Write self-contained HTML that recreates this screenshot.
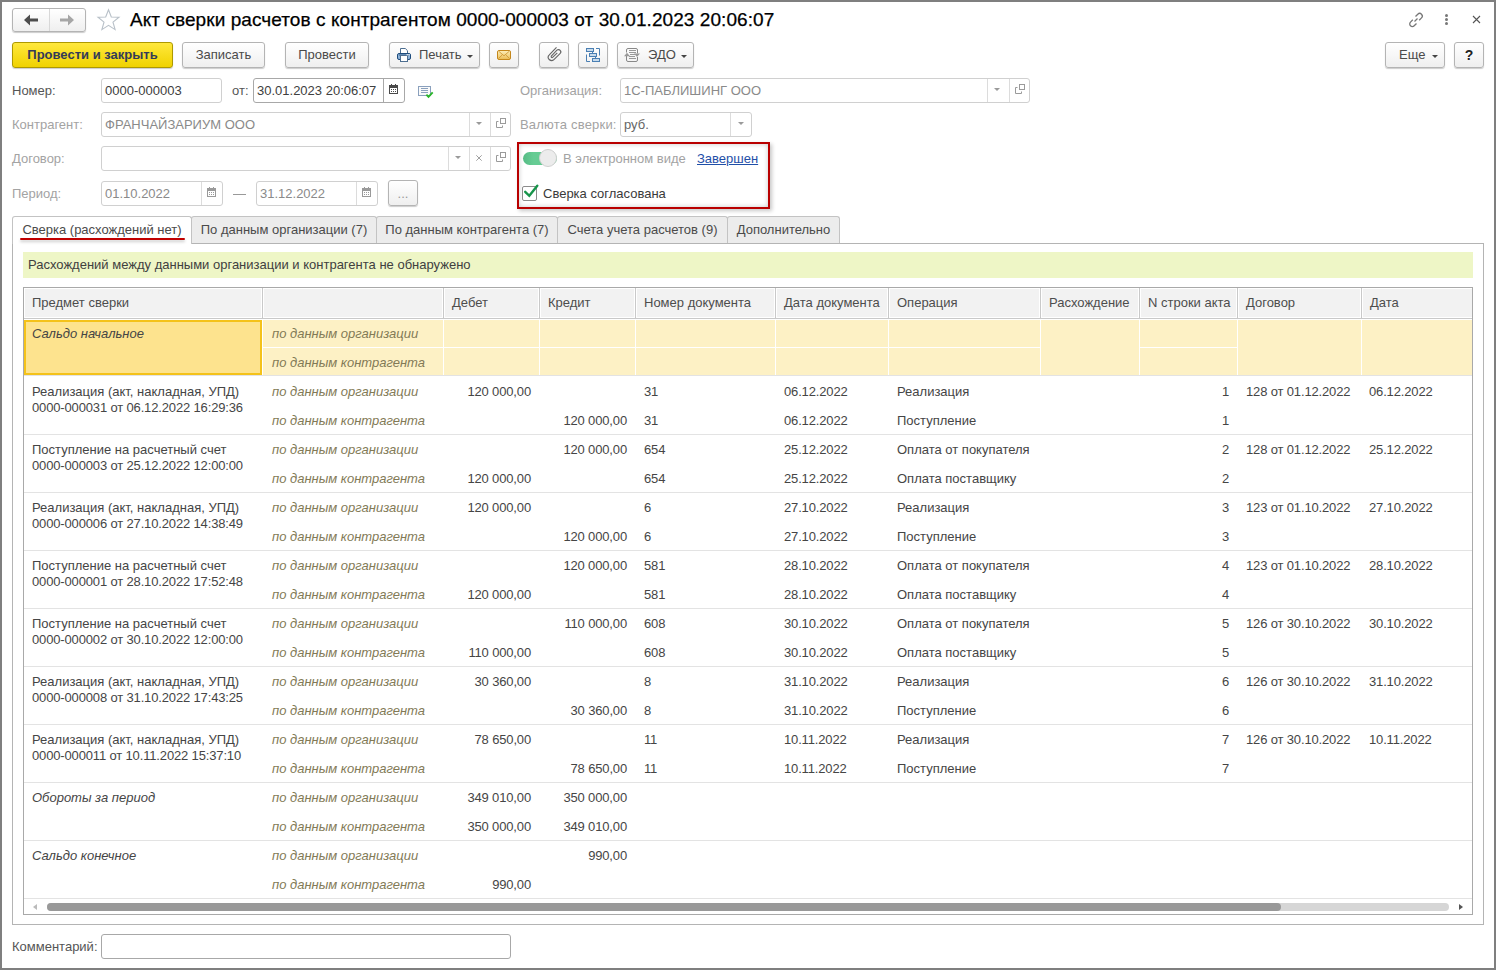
<!DOCTYPE html>
<html><head><meta charset="utf-8"><style>
*{box-sizing:border-box;margin:0;padding:0}
html,body{width:1496px;height:970px;overflow:hidden;background:#fff}
body{font-family:"Liberation Sans",sans-serif;font-size:13px;color:#333;position:relative}
.a{position:absolute}
#win{position:absolute;left:0;top:0;width:1496px;height:970px;border:2px solid #7f7f7f}
.btn{position:absolute;height:26px;border:1px solid #b4b4b4;border-radius:3px;background:linear-gradient(#fff,#efefef);box-shadow:0 1px 1px rgba(0,0,0,.2);color:#4a4a4a;text-align:center;line-height:24px;white-space:nowrap}
.ybtn{background:linear-gradient(#ffe83c,#f0d200);border-color:#ae9900;color:#333a58;font-weight:bold}
.lbl{position:absolute;color:#555;line-height:16px;white-space:nowrap}
.dis{color:#a3a3a3}
.inp{position:absolute;height:25px;border:1px solid #d0d0d0;border-radius:3px;background:#fff;line-height:24px;padding-left:3px;color:#404040;white-space:nowrap;overflow:hidden}
.sep{position:absolute;top:0;bottom:0;width:1px;background:#dcdcdc}
.tab{position:absolute;top:216px;height:27px;border:1px solid #c3c3c3;border-bottom:none;border-radius:3px 3px 0 0;background:#ececec;color:#4a4a4a;line-height:25px;text-align:center;white-space:nowrap}
.th{position:absolute;top:288px;height:30px;line-height:29px;padding-left:8px;color:#4d4d4d;border-right:1px solid #dcdcdc;white-space:nowrap;background:#f2f2f2}
.t{position:absolute;white-space:nowrap;line-height:16px;color:#454545}
.o{position:absolute;white-space:nowrap;line-height:16px;color:#827a56;font-style:italic}
.hl{position:absolute;left:24px;width:1448px;height:1px;background:#e3e3e3}
</style></head><body>
<div class="btn" style="left:12px;top:8px;width:74px;height:24px;border-radius:3px"></div>
<div class="a" style="left:49px;top:9px;width:1px;height:22px;background:#d8d8d8"></div>
<svg class="a" style="left:23px;top:13px" width="16" height="14" viewBox="0 0 16 14"><path d="M1 7 L7 1.6 V5.6 H15 V8.6 H7 V12.4 Z" fill="#4d4d4d"/></svg>
<svg class="a" style="left:59px;top:13px" width="16" height="14" viewBox="0 0 16 14"><path d="M15 7 L9 1.6 V5.6 H1 V8.6 H9 V12.4 Z" fill="#a6a6a6"/></svg>
<svg class="a" style="left:96px;top:8px" width="25" height="24" viewBox="0 0 25 24"><path d="M12.5 1.8 L15.3 9 L23 9.3 L17 14.1 L19.1 21.6 L12.5 17.4 L5.9 21.6 L8 14.1 L2 9.3 L9.7 9 Z" fill="none" stroke="#b8c0c8" stroke-width="1.1"/></svg>
<div class="a" style="left:130px;top:8px;font-size:19px;letter-spacing:0.07px;color:#000;line-height:24px;-webkit-text-stroke:0.25px #000;white-space:nowrap">Акт сверки расчетов с контрагентом 0000-000003 от 30.01.2023 20:06:07</div>
<svg class="a" style="left:1406px;top:10px" width="20" height="20" viewBox="0 0 20 20"><g fill="none" stroke="#777" stroke-width="1.3"><path d="M8.5 11.5 L11.5 8.5"/><path d="M9.5 6.5 L11.8 4.2 a2.6 2.6 0 0 1 3.7 3.7 L13.2 10.2"/><path d="M10.5 13.5 L8.2 15.8 a2.6 2.6 0 0 1 -3.7 -3.7 L6.8 9.8"/></g></svg>
<div class="a" style="left:1445px;top:14px;width:3px;height:3px;border-radius:50%;background:#777"></div>
<div class="a" style="left:1445px;top:18px;width:3px;height:3px;border-radius:50%;background:#777"></div>
<div class="a" style="left:1445px;top:22px;width:3px;height:3px;border-radius:50%;background:#777"></div>
<svg class="a" style="left:1472px;top:15px" width="9" height="9" viewBox="0 0 9 9"><path d="M1 1 L8 8 M8 1 L1 8" stroke="#555" stroke-width="1.1"/></svg>
<div class="btn ybtn" style="left:12px;top:42px;width:161px">Провести и закрыть</div>
<div class="btn" style="left:182px;top:42px;width:83px">Записать</div>
<div class="btn" style="left:285px;top:42px;width:84px">Провести</div>
<div class="btn" style="left:389px;top:42px;width:91px;text-align:left;padding-left:29px">Печать</div>
<div class="btn" style="left:489px;top:42px;width:30px"></div>
<div class="btn" style="left:539px;top:42px;width:30px"></div>
<div class="btn" style="left:578px;top:42px;width:30px"></div>
<div class="btn" style="left:617px;top:42px;width:77px;text-align:left;padding-left:30px">ЭДО</div>
<div class="btn" style="left:1385px;top:42px;width:60px;text-align:left;padding-left:13px">Еще</div>
<div class="btn" style="left:1454px;top:42px;width:30px;font-weight:bold;color:#222;font-size:14px">?</div>
<div class="a" style="left:467px;top:55px;width:0;height:0;border-left:3px solid transparent;border-right:3px solid transparent;border-top:3px solid #444"></div>
<div class="a" style="left:681px;top:55px;width:0;height:0;border-left:3px solid transparent;border-right:3px solid transparent;border-top:3px solid #444"></div>
<div class="a" style="left:1432px;top:55px;width:0;height:0;border-left:3px solid transparent;border-right:3px solid transparent;border-top:3px solid #444"></div>
<svg class="a" style="left:397px;top:48px" width="14" height="14" viewBox="0 0 14 14">
<path d="M3.5 0.5 H8.3 L10.5 2.7 V5.5 H3.5 Z" fill="#fff" stroke="#4d6e90" stroke-width="1"/>
<rect x="0.5" y="5.5" width="13" height="6" rx="1.5" fill="#8db2d8" stroke="#1e4c7c" stroke-width="1"/>
<path d="M2 7 H12" stroke="#1e4c7c" stroke-width="0.8"/>
<rect x="3.5" y="7.5" width="7" height="6" fill="#fff" stroke="#4d6e90" stroke-width="1"/>
<rect x="9.6" y="6.1" width="1.2" height="1.2" fill="#fff"/><rect x="11.4" y="6.1" width="1.2" height="1.2" fill="#fff"/>
</svg>
<svg class="a" style="left:497px;top:50px" width="14" height="10" viewBox="0 0 14 10">
<defs><linearGradient id="mg" x1="0" y1="0" x2="0" y2="1"><stop offset="0" stop-color="#fdf0bc"/><stop offset="1" stop-color="#ebbd55"/></linearGradient></defs>
<rect x="0.5" y="0.5" width="13" height="9" rx="1.5" fill="url(#mg)" stroke="#c4871c" stroke-width="1"/>
<path d="M2 1.5 L7 5.8 L12 1.5 M1.5 8.5 L5.3 4.8 M12.5 8.5 L8.7 4.8" fill="none" stroke="#cf9a35" stroke-width="0.9"/>
</svg>
<svg class="a" style="left:545px;top:45px" width="20" height="19" viewBox="0 0 20 19">
<path transform="translate(0.7,-0.6)" d="M10.8 3 L3.6 10.4 A3.1 3.1 0 0 0 8.2 15.2 L14.3 9.2 A2.3 2.3 0 0 0 11.2 5.8 L5.6 11.8 A0.9 0.9 0 0 0 6.9 13 L11.6 8.4" fill="none" stroke="#666" stroke-width="1.15"/>
</svg>
<svg class="a" style="left:585px;top:47px" width="16" height="16" viewBox="0 0 16 16">
<g stroke="#4a7fb3" stroke-width="1" fill="#c8dbec">
<rect x="1.5" y="1.5" width="7" height="3"/><rect x="4.5" y="6.5" width="7" height="3"/><rect x="7.5" y="11.5" width="7" height="3"/>
</g>
<path d="M7.5 4.5 V6.5 M10.5 9.5 V11.5 M11 1.5 H14.5 V8.5 M1.5 7.5 V14.5 H5" fill="none" stroke="#4a7fb3" stroke-width="1"/>
</svg>
<svg class="a" style="left:624px;top:48px" width="16" height="14" viewBox="0 0 16 14">
<path d="M2.5 4.5 V2 a1.5 1.5 0 0 1 1.5 -1.5 H12 a1.5 1.5 0 0 1 1.5 1.5 V5.5 M13.5 9 V12 a1.5 1.5 0 0 1 -1.5 1.5 H4 a1.5 1.5 0 0 1 -1.5 -1.5 V8" fill="none" stroke="#888" stroke-width="1"/>
<path d="M4.5 2.5 H12 M4.5 4.5 H12 M6 6.5 H11 M5 8.5 H11 M4.5 10.5 H12" stroke="#999" stroke-width="1" shape-rendering="crispEdges"/>
<path d="M0 8.2 L3 4.8 L6 8.2 Z M10 5.6 L16 5.6 L13 9 Z" fill="#999"/>
</svg>
<div class="lbl" style="left:12px;top:83px">Номер:</div>
<div class="inp" style="left:101px;top:78px;width:121px">0000-000003</div>
<div class="lbl" style="left:232px;top:83px">от:</div>
<div class="inp" style="left:253px;top:78px;width:152px;border-color:#a8a8a8">30.01.2023 20:06:07<div class="sep" style="left:129px;background:#a8a8a8"></div></div>
<svg class="a" style="left:389px;top:84px" width="9" height="10" viewBox="0 0 9 10" shape-rendering="crispEdges">
<path d="M0.5 1.5 H8.5 V9.5 H0.5 Z" fill="#fff" stroke="#4a4a4a" stroke-width="1"/>
<rect x="0" y="1" width="9" height="3" fill="#4a4a4a"/>
<rect x="2" y="0" width="1" height="1" fill="#4a4a4a"/><rect x="6" y="0" width="1" height="1" fill="#4a4a4a"/>
<g fill="#4a4a4a"><rect x="2" y="5" width="1" height="1"/><rect x="4" y="5" width="1" height="1"/><rect x="6" y="5" width="1" height="1"/>
<rect x="2" y="7" width="1" height="1"/><rect x="4" y="7" width="1" height="1"/><rect x="6" y="7" width="1" height="1"/></g>
</svg>
<svg class="a" style="left:417px;top:85px" width="17" height="14" viewBox="0 0 17 14">
<rect x="1.5" y="1.5" width="12" height="9" fill="#fafafa" stroke="#8aa0bd" stroke-width="1"/>
<path d="M4 3.5 H11 M4 5.5 H11 M4 7.5 H11" stroke="#8aa0bd" stroke-width="1"/>
<path d="M9.4 9.6 L11.5 11.8 L15.7 7.4" fill="none" stroke="#2ab52a" stroke-width="1.9"/>
</svg>
<div class="lbl dis" style="left:12px;top:117px">Контрагент:</div>
<div class="inp" style="left:101px;top:112px;width:410px;color:#8a8a8a">ФРАНЧАЙЗАРИУМ ООО<div class="sep" style="left:367px"></div><div class="sep" style="left:388px"></div></div>
<div class="a" style="left:476px;top:122px;width:0;height:0;border-left:3px solid transparent;border-right:3px solid transparent;border-top:3px solid #9a9a9a"></div>
<svg class="a" style="left:496px;top:118px" width="10" height="10" viewBox="0 0 10 10">
<rect x="4.5" y="0.5" width="5" height="5" fill="none" stroke="#9a9a9a" stroke-width="1"/>
<path d="M2.5 3.5 H0.5 V9.5 H6.5 V7.5" fill="none" stroke="#9a9a9a" stroke-width="1"/>
</svg>
<div class="lbl dis" style="left:12px;top:151px">Договор:</div>
<div class="inp" style="left:101px;top:146px;width:410px"><div class="sep" style="left:346px"></div><div class="sep" style="left:367px"></div><div class="sep" style="left:388px"></div></div>
<div class="a" style="left:455px;top:156px;width:0;height:0;border-left:3px solid transparent;border-right:3px solid transparent;border-top:3px solid #9a9a9a"></div>
<svg class="a" style="left:476px;top:155px" width="6" height="6" viewBox="0 0 6 6"><path d="M0.3 0.3 L5.7 5.7 M5.7 0.3 L0.3 5.7" stroke="#a0a0a0" stroke-width="1"/></svg>
<svg class="a" style="left:496px;top:152px" width="10" height="10" viewBox="0 0 10 10">
<rect x="4.5" y="0.5" width="5" height="5" fill="none" stroke="#9a9a9a" stroke-width="1"/>
<path d="M2.5 3.5 H0.5 V9.5 H6.5 V7.5" fill="none" stroke="#9a9a9a" stroke-width="1"/>
</svg>
<div class="lbl dis" style="left:12px;top:186px">Период:</div>
<div class="inp" style="left:101px;top:181px;width:122px;color:#8a8a8a">01.10.2022<div class="sep" style="left:99px"></div></div>
<svg class="a" style="left:207px;top:187px" width="9" height="10" viewBox="0 0 9 10" shape-rendering="crispEdges">
<path d="M0.5 1.5 H8.5 V9.5 H0.5 Z" fill="#fff" stroke="#9a9a9a" stroke-width="1"/>
<rect x="0" y="1" width="9" height="3" fill="#9a9a9a"/>
<rect x="2" y="0" width="1" height="1" fill="#9a9a9a"/><rect x="6" y="0" width="1" height="1" fill="#9a9a9a"/>
<g fill="#9a9a9a"><rect x="2" y="5" width="1" height="1"/><rect x="4" y="5" width="1" height="1"/><rect x="6" y="5" width="1" height="1"/>
<rect x="2" y="7" width="1" height="1"/><rect x="4" y="7" width="1" height="1"/><rect x="6" y="7" width="1" height="1"/></g>
</svg>
<div class="a" style="left:233px;top:194px;width:13px;height:1px;background:#999"></div>
<div class="inp" style="left:256px;top:181px;width:122px;color:#8a8a8a">31.12.2022<div class="sep" style="left:99px"></div></div>
<svg class="a" style="left:362px;top:187px" width="9" height="10" viewBox="0 0 9 10" shape-rendering="crispEdges">
<path d="M0.5 1.5 H8.5 V9.5 H0.5 Z" fill="#fff" stroke="#9a9a9a" stroke-width="1"/>
<rect x="0" y="1" width="9" height="3" fill="#9a9a9a"/>
<rect x="2" y="0" width="1" height="1" fill="#9a9a9a"/><rect x="6" y="0" width="1" height="1" fill="#9a9a9a"/>
<g fill="#9a9a9a"><rect x="2" y="5" width="1" height="1"/><rect x="4" y="5" width="1" height="1"/><rect x="6" y="5" width="1" height="1"/>
<rect x="2" y="7" width="1" height="1"/><rect x="4" y="7" width="1" height="1"/><rect x="6" y="7" width="1" height="1"/></g>
</svg>
<div class="btn" style="left:388px;top:180px;width:30px;color:#999;line-height:26px">...</div>
<div class="lbl dis" style="left:520px;top:83px">Организация:</div>
<div class="inp" style="left:620px;top:78px;width:410px;color:#8a8a8a">1С-ПАБЛИШИНГ ООО<div class="sep" style="left:366px"></div><div class="sep" style="left:388px"></div></div>
<div class="a" style="left:994px;top:88px;width:0;height:0;border-left:3px solid transparent;border-right:3px solid transparent;border-top:3px solid #9a9a9a"></div>
<svg class="a" style="left:1015px;top:84px" width="10" height="10" viewBox="0 0 10 10">
<rect x="4.5" y="0.5" width="5" height="5" fill="none" stroke="#9a9a9a" stroke-width="1"/>
<path d="M2.5 3.5 H0.5 V9.5 H6.5 V7.5" fill="none" stroke="#9a9a9a" stroke-width="1"/>
</svg>
<div class="lbl dis" style="left:520px;top:117px;letter-spacing:0.2px">Валюта сверки:</div>
<div class="inp" style="left:620px;top:112px;width:132px;color:#8a8a8a"><span style="color:#666">руб.</span><div class="sep" style="left:109px"></div></div>
<div class="a" style="left:738px;top:122px;width:0;height:0;border-left:3px solid transparent;border-right:3px solid transparent;border-top:3px solid #9a9a9a"></div>
<div class="a" style="left:519px;top:144px;width:249px;height:63px;box-shadow:inset 0 0 5px rgba(0,0,0,.22)"></div>
<div class="a" style="left:517px;top:142px;width:253px;height:67px;border:2px solid #b90000;box-shadow:2px 2px 4px rgba(0,0,0,.22)"></div>
<div class="a" style="left:523px;top:152px;width:34px;height:13px;border-radius:7px;background:linear-gradient(90deg,#55bb84,#66cc94 30%,#66cc94)"></div>
<div class="a" style="left:539px;top:149px;width:18px;height:18px;border-radius:50%;background:#ececec;border:1px solid #d0d0d0"></div>
<div class="lbl dis" style="left:563px;top:151px">В электронном виде</div>
<div class="lbl" style="left:697px;top:151px;color:#1f4fa8;text-decoration:underline">Завершен</div>
<div class="a" style="left:522px;top:186px;width:15px;height:15px;border:1px solid #8c8c8c;border-radius:2px;background:#fff"></div>
<svg class="a" style="left:523px;top:184px" width="16" height="14" viewBox="0 0 16 14"><path d="M2.2 7.8 L6.3 11.8 L14.3 1.8" fill="none" stroke="#17944a" stroke-width="2.4" stroke-linecap="round"/></svg>
<div class="lbl" style="left:543px;top:186px;color:#3a3a3a">Сверка согласована</div>
<div class="a" style="left:12px;top:243px;width:1472px;height:682px;border:1px solid #b4b4b4"></div>
<div class="tab" style="left:12px;width:180px;background:#fff;height:28px">Сверка (расхождений нет)</div>
<div class="tab" style="left:191px;width:186px">По данным организации (7)</div>
<div class="tab" style="left:376px;width:182px">По данным контрагента (7)</div>
<div class="tab" style="left:557px;width:171px">Счета учета расчетов (9)</div>
<div class="tab" style="left:727px;width:113px">Дополнительно</div>
<div class="a" style="left:20px;top:238px;width:165px;height:2px;background:#c00000;border-radius:1px;box-shadow:0 2px 3px rgba(0,0,0,.22)"></div>
<div class="a" style="left:23px;top:252px;width:1450px;height:26px;background:#eef6c6;line-height:26px;padding-left:5px;color:#404040">Расхождений между данными организации и контрагента не обнаружено</div>
<div class="a" style="left:23px;top:287px;width:1450px;height:628px;border:1px solid #a9a9a9"></div>
<div class="a" style="left:24px;top:288px;width:1448px;height:30px;background:#f2f2f2;box-shadow:inset 1px 1px 0 #fff, inset 0 -1px 0 #fff"></div>
<div class="a" style="left:261px;top:288px;width:3px;height:30px;background:linear-gradient(90deg,#fff 0,#fff 1px,#c9c9c9 1px,#c9c9c9 2px,#fff 2px)"></div>
<div class="a" style="left:442px;top:288px;width:3px;height:30px;background:linear-gradient(90deg,#fff 0,#fff 1px,#c9c9c9 1px,#c9c9c9 2px,#fff 2px)"></div>
<div class="a" style="left:538px;top:288px;width:3px;height:30px;background:linear-gradient(90deg,#fff 0,#fff 1px,#c9c9c9 1px,#c9c9c9 2px,#fff 2px)"></div>
<div class="a" style="left:634px;top:288px;width:3px;height:30px;background:linear-gradient(90deg,#fff 0,#fff 1px,#c9c9c9 1px,#c9c9c9 2px,#fff 2px)"></div>
<div class="a" style="left:774px;top:288px;width:3px;height:30px;background:linear-gradient(90deg,#fff 0,#fff 1px,#c9c9c9 1px,#c9c9c9 2px,#fff 2px)"></div>
<div class="a" style="left:887px;top:288px;width:3px;height:30px;background:linear-gradient(90deg,#fff 0,#fff 1px,#c9c9c9 1px,#c9c9c9 2px,#fff 2px)"></div>
<div class="a" style="left:1039px;top:288px;width:3px;height:30px;background:linear-gradient(90deg,#fff 0,#fff 1px,#c9c9c9 1px,#c9c9c9 2px,#fff 2px)"></div>
<div class="a" style="left:1138px;top:288px;width:3px;height:30px;background:linear-gradient(90deg,#fff 0,#fff 1px,#c9c9c9 1px,#c9c9c9 2px,#fff 2px)"></div>
<div class="a" style="left:1236px;top:288px;width:3px;height:30px;background:linear-gradient(90deg,#fff 0,#fff 1px,#c9c9c9 1px,#c9c9c9 2px,#fff 2px)"></div>
<div class="a" style="left:1360px;top:288px;width:3px;height:30px;background:linear-gradient(90deg,#fff 0,#fff 1px,#c9c9c9 1px,#c9c9c9 2px,#fff 2px)"></div>
<div class="t" style="left:32px;top:295px;color:#4d4d4d">Предмет сверки</div>
<div class="t" style="left:271px;top:295px;color:#4d4d4d"></div>
<div class="t" style="left:452px;top:295px;color:#4d4d4d">Дебет</div>
<div class="t" style="left:548px;top:295px;color:#4d4d4d">Кредит</div>
<div class="t" style="left:644px;top:295px;color:#4d4d4d">Номер документа</div>
<div class="t" style="left:784px;top:295px;color:#4d4d4d">Дата документа</div>
<div class="t" style="left:897px;top:295px;color:#4d4d4d">Операция</div>
<div class="t" style="left:1049px;top:295px;color:#4d4d4d">Расхождение</div>
<div class="t" style="left:1148px;top:295px;color:#4d4d4d">N строки акта</div>
<div class="t" style="left:1246px;top:295px;color:#4d4d4d">Договор</div>
<div class="t" style="left:1370px;top:295px;color:#4d4d4d">Дата</div>
<div class="a" style="left:24px;top:318px;width:1448px;height:1px;background:#c9c9c9"></div>
<div class="a" style="left:24px;top:319px;width:1448px;height:1px;background:#fff"></div>
<div class="a" style="left:24px;top:320px;width:1448px;height:55px;background:#fdf1c5"></div>
<div class="a" style="left:262px;top:320px;width:1px;height:55px;background:#fff"></div>
<div class="a" style="left:443px;top:320px;width:1px;height:55px;background:#fff"></div>
<div class="a" style="left:539px;top:320px;width:1px;height:55px;background:#fff"></div>
<div class="a" style="left:635px;top:320px;width:1px;height:55px;background:#fff"></div>
<div class="a" style="left:775px;top:320px;width:1px;height:55px;background:#fff"></div>
<div class="a" style="left:888px;top:320px;width:1px;height:55px;background:#fff"></div>
<div class="a" style="left:1040px;top:320px;width:1px;height:55px;background:#fff"></div>
<div class="a" style="left:1139px;top:320px;width:1px;height:55px;background:#fff"></div>
<div class="a" style="left:1237px;top:320px;width:1px;height:55px;background:#fff"></div>
<div class="a" style="left:1361px;top:320px;width:1px;height:55px;background:#fff"></div>
<div class="a" style="left:262px;top:347px;width:778px;height:1px;background:#fff"></div>
<div class="a" style="left:1139px;top:347px;width:98px;height:1px;background:#fff"></div>
<div class="a" style="left:24px;top:320px;width:238px;height:55px;background:#fde38e;border:2px solid #f4c21a"></div>
<div class="a" style="left:24px;top:375px;width:1448px;height:1px;background:#e3e3e3"></div>
<div class="t" style="left:32px;top:326px;font-style:italic;">Сальдо начальное</div>
<div class="o" style="left:272px;top:326px">по данным организации</div>
<div class="o" style="left:272px;top:355px">по данным контрагента</div>
<div class="t" style="left:32px;top:384px;">Реализация (акт, накладная, УПД)</div>
<div class="t" style="left:32px;top:400px;letter-spacing:-0.15px;">0000-000031 от 06.12.2022 16:29:36</div>
<div class="o" style="left:272px;top:384px">по данным организации</div>
<div class="o" style="left:272px;top:413px">по данным контрагента</div>
<div class="t" style="left:331px;top:384px;width:200px;text-align:right;letter-spacing:-0.15px">120 000,00</div>
<div class="t" style="left:644px;top:384px;letter-spacing:-0.15px;">31</div>
<div class="t" style="left:784px;top:384px;letter-spacing:-0.15px;">06.12.2022</div>
<div class="t" style="left:897px;top:384px;">Реализация</div>
<div class="t" style="left:1029px;top:384px;width:200px;text-align:right;letter-spacing:-0.15px">1</div>
<div class="t" style="left:1246px;top:384px;letter-spacing:-0.15px;">128 от 01.12.2022</div>
<div class="t" style="left:1369px;top:384px;letter-spacing:-0.15px;">06.12.2022</div>
<div class="t" style="left:427px;top:413px;width:200px;text-align:right;letter-spacing:-0.15px">120 000,00</div>
<div class="t" style="left:644px;top:413px;letter-spacing:-0.15px;">31</div>
<div class="t" style="left:784px;top:413px;letter-spacing:-0.15px;">06.12.2022</div>
<div class="t" style="left:897px;top:413px;">Поступление</div>
<div class="t" style="left:1029px;top:413px;width:200px;text-align:right;letter-spacing:-0.15px">1</div>
<div class="hl" style="top:434px"></div>
<div class="t" style="left:32px;top:442px;">Поступление на расчетный счет</div>
<div class="t" style="left:32px;top:458px;letter-spacing:-0.15px;">0000-000003 от 25.12.2022 12:00:00</div>
<div class="o" style="left:272px;top:442px">по данным организации</div>
<div class="o" style="left:272px;top:471px">по данным контрагента</div>
<div class="t" style="left:427px;top:442px;width:200px;text-align:right;letter-spacing:-0.15px">120 000,00</div>
<div class="t" style="left:644px;top:442px;letter-spacing:-0.15px;">654</div>
<div class="t" style="left:784px;top:442px;letter-spacing:-0.15px;">25.12.2022</div>
<div class="t" style="left:897px;top:442px;">Оплата от покупателя</div>
<div class="t" style="left:1029px;top:442px;width:200px;text-align:right;letter-spacing:-0.15px">2</div>
<div class="t" style="left:1246px;top:442px;letter-spacing:-0.15px;">128 от 01.12.2022</div>
<div class="t" style="left:1369px;top:442px;letter-spacing:-0.15px;">25.12.2022</div>
<div class="t" style="left:331px;top:471px;width:200px;text-align:right;letter-spacing:-0.15px">120 000,00</div>
<div class="t" style="left:644px;top:471px;letter-spacing:-0.15px;">654</div>
<div class="t" style="left:784px;top:471px;letter-spacing:-0.15px;">25.12.2022</div>
<div class="t" style="left:897px;top:471px;">Оплата поставщику</div>
<div class="t" style="left:1029px;top:471px;width:200px;text-align:right;letter-spacing:-0.15px">2</div>
<div class="hl" style="top:492px"></div>
<div class="t" style="left:32px;top:500px;">Реализация (акт, накладная, УПД)</div>
<div class="t" style="left:32px;top:516px;letter-spacing:-0.15px;">0000-000006 от 27.10.2022 14:38:49</div>
<div class="o" style="left:272px;top:500px">по данным организации</div>
<div class="o" style="left:272px;top:529px">по данным контрагента</div>
<div class="t" style="left:331px;top:500px;width:200px;text-align:right;letter-spacing:-0.15px">120 000,00</div>
<div class="t" style="left:644px;top:500px;letter-spacing:-0.15px;">6</div>
<div class="t" style="left:784px;top:500px;letter-spacing:-0.15px;">27.10.2022</div>
<div class="t" style="left:897px;top:500px;">Реализация</div>
<div class="t" style="left:1029px;top:500px;width:200px;text-align:right;letter-spacing:-0.15px">3</div>
<div class="t" style="left:1246px;top:500px;letter-spacing:-0.15px;">123 от 01.10.2022</div>
<div class="t" style="left:1369px;top:500px;letter-spacing:-0.15px;">27.10.2022</div>
<div class="t" style="left:427px;top:529px;width:200px;text-align:right;letter-spacing:-0.15px">120 000,00</div>
<div class="t" style="left:644px;top:529px;letter-spacing:-0.15px;">6</div>
<div class="t" style="left:784px;top:529px;letter-spacing:-0.15px;">27.10.2022</div>
<div class="t" style="left:897px;top:529px;">Поступление</div>
<div class="t" style="left:1029px;top:529px;width:200px;text-align:right;letter-spacing:-0.15px">3</div>
<div class="hl" style="top:550px"></div>
<div class="t" style="left:32px;top:558px;">Поступление на расчетный счет</div>
<div class="t" style="left:32px;top:574px;letter-spacing:-0.15px;">0000-000001 от 28.10.2022 17:52:48</div>
<div class="o" style="left:272px;top:558px">по данным организации</div>
<div class="o" style="left:272px;top:587px">по данным контрагента</div>
<div class="t" style="left:427px;top:558px;width:200px;text-align:right;letter-spacing:-0.15px">120 000,00</div>
<div class="t" style="left:644px;top:558px;letter-spacing:-0.15px;">581</div>
<div class="t" style="left:784px;top:558px;letter-spacing:-0.15px;">28.10.2022</div>
<div class="t" style="left:897px;top:558px;">Оплата от покупателя</div>
<div class="t" style="left:1029px;top:558px;width:200px;text-align:right;letter-spacing:-0.15px">4</div>
<div class="t" style="left:1246px;top:558px;letter-spacing:-0.15px;">123 от 01.10.2022</div>
<div class="t" style="left:1369px;top:558px;letter-spacing:-0.15px;">28.10.2022</div>
<div class="t" style="left:331px;top:587px;width:200px;text-align:right;letter-spacing:-0.15px">120 000,00</div>
<div class="t" style="left:644px;top:587px;letter-spacing:-0.15px;">581</div>
<div class="t" style="left:784px;top:587px;letter-spacing:-0.15px;">28.10.2022</div>
<div class="t" style="left:897px;top:587px;">Оплата поставщику</div>
<div class="t" style="left:1029px;top:587px;width:200px;text-align:right;letter-spacing:-0.15px">4</div>
<div class="hl" style="top:608px"></div>
<div class="t" style="left:32px;top:616px;">Поступление на расчетный счет</div>
<div class="t" style="left:32px;top:632px;letter-spacing:-0.15px;">0000-000002 от 30.10.2022 12:00:00</div>
<div class="o" style="left:272px;top:616px">по данным организации</div>
<div class="o" style="left:272px;top:645px">по данным контрагента</div>
<div class="t" style="left:427px;top:616px;width:200px;text-align:right;letter-spacing:-0.15px">110 000,00</div>
<div class="t" style="left:644px;top:616px;letter-spacing:-0.15px;">608</div>
<div class="t" style="left:784px;top:616px;letter-spacing:-0.15px;">30.10.2022</div>
<div class="t" style="left:897px;top:616px;">Оплата от покупателя</div>
<div class="t" style="left:1029px;top:616px;width:200px;text-align:right;letter-spacing:-0.15px">5</div>
<div class="t" style="left:1246px;top:616px;letter-spacing:-0.15px;">126 от 30.10.2022</div>
<div class="t" style="left:1369px;top:616px;letter-spacing:-0.15px;">30.10.2022</div>
<div class="t" style="left:331px;top:645px;width:200px;text-align:right;letter-spacing:-0.15px">110 000,00</div>
<div class="t" style="left:644px;top:645px;letter-spacing:-0.15px;">608</div>
<div class="t" style="left:784px;top:645px;letter-spacing:-0.15px;">30.10.2022</div>
<div class="t" style="left:897px;top:645px;">Оплата поставщику</div>
<div class="t" style="left:1029px;top:645px;width:200px;text-align:right;letter-spacing:-0.15px">5</div>
<div class="hl" style="top:666px"></div>
<div class="t" style="left:32px;top:674px;">Реализация (акт, накладная, УПД)</div>
<div class="t" style="left:32px;top:690px;letter-spacing:-0.15px;">0000-000008 от 31.10.2022 17:43:25</div>
<div class="o" style="left:272px;top:674px">по данным организации</div>
<div class="o" style="left:272px;top:703px">по данным контрагента</div>
<div class="t" style="left:331px;top:674px;width:200px;text-align:right;letter-spacing:-0.15px">30 360,00</div>
<div class="t" style="left:644px;top:674px;letter-spacing:-0.15px;">8</div>
<div class="t" style="left:784px;top:674px;letter-spacing:-0.15px;">31.10.2022</div>
<div class="t" style="left:897px;top:674px;">Реализация</div>
<div class="t" style="left:1029px;top:674px;width:200px;text-align:right;letter-spacing:-0.15px">6</div>
<div class="t" style="left:1246px;top:674px;letter-spacing:-0.15px;">126 от 30.10.2022</div>
<div class="t" style="left:1369px;top:674px;letter-spacing:-0.15px;">31.10.2022</div>
<div class="t" style="left:427px;top:703px;width:200px;text-align:right;letter-spacing:-0.15px">30 360,00</div>
<div class="t" style="left:644px;top:703px;letter-spacing:-0.15px;">8</div>
<div class="t" style="left:784px;top:703px;letter-spacing:-0.15px;">31.10.2022</div>
<div class="t" style="left:897px;top:703px;">Поступление</div>
<div class="t" style="left:1029px;top:703px;width:200px;text-align:right;letter-spacing:-0.15px">6</div>
<div class="hl" style="top:724px"></div>
<div class="t" style="left:32px;top:732px;">Реализация (акт, накладная, УПД)</div>
<div class="t" style="left:32px;top:748px;letter-spacing:-0.15px;">0000-000011 от 10.11.2022 15:37:10</div>
<div class="o" style="left:272px;top:732px">по данным организации</div>
<div class="o" style="left:272px;top:761px">по данным контрагента</div>
<div class="t" style="left:331px;top:732px;width:200px;text-align:right;letter-spacing:-0.15px">78 650,00</div>
<div class="t" style="left:644px;top:732px;letter-spacing:-0.15px;">11</div>
<div class="t" style="left:784px;top:732px;letter-spacing:-0.15px;">10.11.2022</div>
<div class="t" style="left:897px;top:732px;">Реализация</div>
<div class="t" style="left:1029px;top:732px;width:200px;text-align:right;letter-spacing:-0.15px">7</div>
<div class="t" style="left:1246px;top:732px;letter-spacing:-0.15px;">126 от 30.10.2022</div>
<div class="t" style="left:1369px;top:732px;letter-spacing:-0.15px;">10.11.2022</div>
<div class="t" style="left:427px;top:761px;width:200px;text-align:right;letter-spacing:-0.15px">78 650,00</div>
<div class="t" style="left:644px;top:761px;letter-spacing:-0.15px;">11</div>
<div class="t" style="left:784px;top:761px;letter-spacing:-0.15px;">10.11.2022</div>
<div class="t" style="left:897px;top:761px;">Поступление</div>
<div class="t" style="left:1029px;top:761px;width:200px;text-align:right;letter-spacing:-0.15px">7</div>
<div class="hl" style="top:782px"></div>
<div class="t" style="left:32px;top:790px;font-style:italic;">Обороты за период</div>
<div class="o" style="left:272px;top:790px">по данным организации</div>
<div class="o" style="left:272px;top:819px">по данным контрагента</div>
<div class="t" style="left:331px;top:790px;width:200px;text-align:right;letter-spacing:-0.15px">349 010,00</div>
<div class="t" style="left:427px;top:790px;width:200px;text-align:right;letter-spacing:-0.15px">350 000,00</div>
<div class="t" style="left:331px;top:819px;width:200px;text-align:right;letter-spacing:-0.15px">350 000,00</div>
<div class="t" style="left:427px;top:819px;width:200px;text-align:right;letter-spacing:-0.15px">349 010,00</div>
<div class="hl" style="top:840px"></div>
<div class="t" style="left:32px;top:848px;font-style:italic;">Сальдо конечное</div>
<div class="o" style="left:272px;top:848px">по данным организации</div>
<div class="o" style="left:272px;top:877px">по данным контрагента</div>
<div class="t" style="left:427px;top:848px;width:200px;text-align:right;letter-spacing:-0.15px">990,00</div>
<div class="t" style="left:331px;top:877px;width:200px;text-align:right;letter-spacing:-0.15px">990,00</div>
<div class="hl" style="top:898px"></div>
<div class="a" style="left:47px;top:903px;width:1402px;height:8px;border-radius:4px;background:#d6d6d6"></div>
<div class="a" style="left:47px;top:903px;width:1234px;height:8px;border-radius:4px;background:#999"></div>
<div class="a" style="left:33px;top:904px;width:0;height:0;border-top:3px solid transparent;border-bottom:3px solid transparent;border-right:4px solid #bbb"></div>
<div class="a" style="left:1459px;top:903.5px;width:0;height:0;border-top:3.5px solid transparent;border-bottom:3.5px solid transparent;border-left:4px solid #555"></div>
<div class="lbl" style="left:12px;top:939px">Комментарий:</div>
<div class="inp" style="left:101px;top:934px;width:410px;border-color:#a8a8a8"></div>
<div id="win"></div>
</body></html>
